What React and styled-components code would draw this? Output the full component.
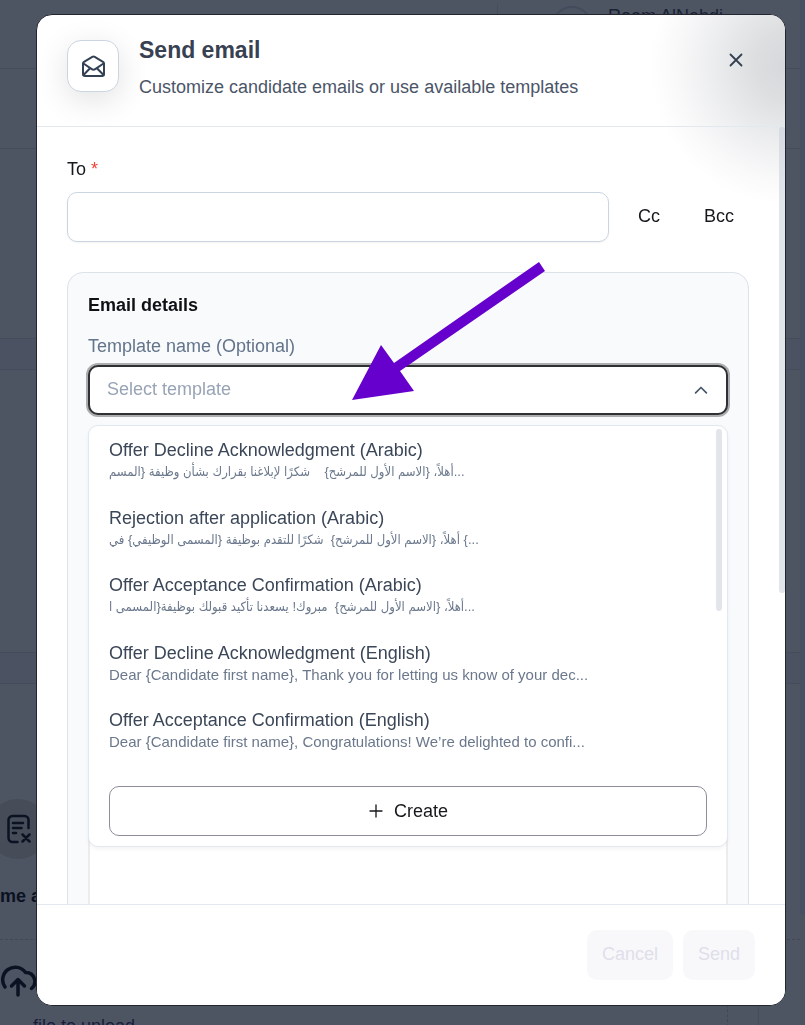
import React, { useState } from 'react'
import styled, { createGlobalStyle } from 'styled-components'

const GlobalStyle = createGlobalStyle`
  * { box-sizing: border-box; }

  body {
    margin: 0;
    overflow: hidden;
    font-family: "Liberation Sans", Arial, "DejaVu Sans Condensed", sans-serif;
    font-size: 18px;
    color: #17181c;
  }

  button, input {
    font: inherit;
    color: inherit;
  }
`

/* ---------- page behind the dialog ---------- */

const Page = styled.div`
  height: 100vh;
  display: flex;
  background: #4e5562;
  overflow: hidden;
`

const PageContent = styled.div`
  flex: 1;
  min-width: 0;
  display: flex;
  flex-direction: column;
`

const PageTrack = styled.div`
  width: 5px;
  background: #4b5260;
`

const PageThumb = styled.div`
  height: 915px;
  background: #465062;
  border-radius: 0 0 0 3px;
`

const TopBar = styled.header`
  height: 69px;
  flex: none;
  display: flex;
  justify-content: flex-end;
  align-items: flex-start;
  gap: 16px;
  padding: 4px 77px 0 0;
  border-bottom: 1px solid #454d5d;
  line-height: 24px;
  color: #1a2236;
`

const Divider = styled.span`
  width: 1px;
  height: 44px;
  margin-right: 38px;
  background: #454d5d;
`

const Avatar = styled.span`
  width: 40px;
  height: 40px;
  margin-top: 2px;
  border: 2px solid #434b5c;
  border-radius: 50%;
`

const Band = styled.div`
  flex: none;
  height: ${p => p.$height}px;
  background: ${p => (p.$tint ? '#4b5261' : 'transparent')};
  border-bottom: 1px solid #454d5d;
`

const ResumeBlock = styled.div`
  flex: none;
  height: 256px;
  padding-top: 115px;
  border-bottom: 1px dashed #3f4859;
  font-weight: bold;
  color: #0b1222;
`

const Disc = styled.div`
  width: 60px;
  height: 60px;
  margin: 0 0 27px -12px;
  display: flex;
  align-items: center;
  justify-content: center;
  border-radius: 50%;
  background: #464c58;
`

const UploadRow = styled.div`
  flex: 1;
  display: flex;
  margin-right: 41px;
  padding-right: 30px;
  border-right: 1px solid #454d5d;
`

const UploadBlock = styled.div`
  flex: 1;
  display: flex;
  flex-direction: column;
  align-items: flex-start;
  gap: 18px;
  padding-top: 20px;
  border-right: 1px dashed #3f4859;
  color: #0b1222;
  white-space: nowrap;

  span { padding-left: 33px; color: #191d3c; }
`

/* ---------- dialog ---------- */

const Overlay = styled.div`
  position: fixed;
  inset: 0;
  display: flex;
  padding: 14px 19px 19px 36px;
`

const Dialog = styled.section`
  position: relative;
  flex: 1;
  min-width: 0;
  display: flex;
  flex-direction: column;
  overflow: hidden;
  background: #fff;
  border: 1px solid #23262e;
  border-radius: 16px;
`

const Glow = styled.div`
  position: absolute;
  top: -90px;
  right: -145px;
  width: 280px;
  height: 280px;
  border-radius: 50%;
  background: radial-gradient(closest-side, #d6d7da 0%, #dddee0 25%, #ecedee 55%, #f9f9fa 82%, #fff 100%);
`

const Head = styled.header`
  position: relative;
  flex: none;
  height: 112px;
  display: flex;
  align-items: flex-start;
  gap: 20px;
  padding: 25px 35px 0 30px;
  border-bottom: 1px solid #e2e8f0;
`

const IconTile = styled.div`
  width: 52px;
  height: 52px;
  display: flex;
  align-items: center;
  justify-content: center;
  border: 1px solid #cbd5e1;
  border-radius: 14px;
  background: #fff;
  box-shadow: 0 8px 32px rgba(0, 0, 0, 0.12);
  color: #334155;
`

const Heading = styled.div`
  flex: 1;

  h2 {
    margin: -4px 0 9px;
    font-size: 23px;
    line-height: 28px;
    color: #374151;
  }

  p {
    margin: 0;
    line-height: 28px;
    color: #4b5568;
  }
`

const CloseButton = styled.button`
  width: 28px;
  height: 28px;
  margin-top: 6px;
  padding: 0;
  display: flex;
  align-items: center;
  justify-content: center;
  border: 0;
  background: none;
  color: #334155;
`

const Body = styled.div`
  position: relative;
  flex: 1;
  min-height: 0;
  display: flex;
  overflow: hidden;
`

const Form = styled.form`
  flex: 1;
  min-width: 0;
  padding: 30px 30px 0;
`

const Scrollbar = styled.div`
  width: 6px;
  height: ${p => p.$height}px;
  border-radius: 3px;
  background: rgba(203, 208, 216, 0.55);
`

const Label = styled.label`
  display: block;
  line-height: 24px;
  color: ${p => (p.$muted ? '#64748b' : '#17181c')};

  span { color: #f04438; }
`

const ToRow = styled.div`
  display: flex;
  align-items: center;
  margin: 11px 0 30px;
`

const ToInput = styled.input`
  flex: 1;
  min-width: 0;
  height: 50px;
  padding: 0 20px;
  border: 1px solid #cbd5e1;
  border-radius: 10px;
  background: #fff;
  box-shadow: 0 1px 2px rgba(16, 24, 40, 0.05);
`

const CopyButton = styled.button`
  width: ${p => (p.$wide ? '60px' : '80px')};
  height: 48px;
  padding: 0 0 2px;
  border: 0;
  background: none;
`

const Card = styled.fieldset`
  min-width: 0;
  height: 700px;
  margin: 0;
  padding: 20px;
  border: 1px solid #dde2ea;
  border-radius: 16px;
  background: #f8fafc;

  h3 {
    margin: 0 0 17px;
    font-size: 18px;
    line-height: 24px;
    color: #101114;
  }
`

const SelectWrap = styled.div`
  position: relative;
  margin-top: 7px;
`

const SelectButton = styled.button`
  width: 100%;
  height: 50px;
  display: flex;
  align-items: center;
  justify-content: space-between;
  padding: 0 15px 0 17px;
  border: 2px solid #2f3033;
  border-radius: 10px;
  background: #fff;
  box-shadow: 0 0 0 2px #acadaf;
  color: #98a4b5;

  span { padding-bottom: 2px; }
  svg { color: #475569; }
`

const Menu = styled.div`
  position: absolute;
  top: 60px;
  left: 0;
  right: 0;
  padding: 3px 5px 10px 0;
  border: 1px solid #e2e8f0;
  border-radius: 10px;
  background: #fff;
  box-shadow: 0 2px 4px rgba(16, 24, 40, 0.05);
`

const MenuScroll = styled.div`
  display: flex;
  justify-content: space-between;
  height: 357px;
`

const Options = styled.ul`
  min-width: 0;
  margin: 0;
  padding: 9px 0 0 20px;
  list-style: none;
`

const Option = styled.li`
  height: 44px;
  margin-bottom: 24px;
  color: #3b4758;
  line-height: 24px;

  &:nth-child(even) { margin-bottom: 23px; }
`

const Preview = styled.div`
  font-size: ${p => (p.$arabic ? '13px' : '15px')};
  line-height: 20px;
  color: #6b788c;
  white-space: pre;
`

const CreateButton = styled.button`
  width: calc(100% - 35px);
  height: 50px;
  margin-left: 20px;
  display: flex;
  align-items: center;
  justify-content: center;
  gap: 10px;
  border: 1px solid #8d8d9b;
  border-radius: 10px;
  background: #fff;
`

const Editor = styled.div`
  height: 500px;
  margin-top: 80px;
  border: 2px solid #ececee;
  background: #fff;
`

const Footer = styled.footer`
  flex: none;
  height: 101px;
  display: flex;
  align-items: center;
  justify-content: flex-end;
  gap: 10px;
  padding: 0 30px;
  border-top: 1px solid #e2e8f0;
  background: #fff;
`

const FooterButton = styled.button`
  height: 50px;
  padding: 0 15px 2px;
  border: 0;
  border-radius: 10px;
  background: #f8f8fb;
  color: #dfdfea;
`

const Arrow = styled.svg`
  position: absolute;
  top: 135px;
  left: 315px;
  pointer-events: none;
`

const Line = ({ size = 24, box = 24, width = 2, children }) => (
  <svg width={size} height={size} viewBox={`0 0 ${box} ${box}`} fill="none" stroke="currentColor"
    strokeWidth={width} strokeLinecap="round" strokeLinejoin="round" aria-hidden="true">
    {children}
  </svg>
)

const templates = [
  {
    name: 'Offer Decline Acknowledgment (Arabic)',
    arabic: true,
    preview: 'أهلاً، {الاسم الأول للمرشح}    شكرًا لإبلاغنا بقرارك بشأن وظيفة {المسم...',
  },
  {
    name: 'Rejection after application (Arabic)',
    arabic: true,
    preview: 'أهلاً، {الاسم الأول للمرشح}  شكرًا للتقدم بوظيفة {المسمى الوظيفي} في {...',
  },
  {
    name: 'Offer Acceptance Confirmation (Arabic)',
    arabic: true,
    preview: 'أهلاً، {الاسم الأول للمرشح}  مبروك! يسعدنا تأكيد قبولك بوظيفة{المسمى ا...',
  },
  {
    name: 'Offer Decline Acknowledgment (English)',
    preview: 'Dear {Candidate first name}, Thank you for letting us know of your dec...',
  },
  {
    name: 'Offer Acceptance Confirmation (English)',
    preview: 'Dear {Candidate first name}, Congratulations! We’re delighted to confi...',
  },
]

const Background = () => (
  <Page>
    <PageContent>
      <TopBar>
        <Divider />
        <Avatar />
        <span>Reem AlNahdi</span>
      </TopBar>
      <Band $height={80} />
      <Band $height={190} />
      <Band $height={31} $tint />
      <Band $height={283} />
      <Band $height={31} $tint />
      <ResumeBlock>
        <Disc>
          <Line size={32} box={32} width={2.5}>
            <path d="M26.500 15V7a4 4 0 0 0-4-4h-12a4 4 0 0 0-4 4v18a4 4 0 0 0 4 4h5" />
            <path d="M11 10h10M11 15h8.500M11 20h3M20.500 21.500l7 7M27.500 21.500l-7 7" />
          </Line>
        </Disc>
        me a
      </ResumeBlock>
      <UploadRow>
        <UploadBlock>
          <Line size={38} box={38} width={3.5}>
            <path d="M5 27A12 12 0 1 1 25.500 12.500A9 9 0 0 1 31.500 28.500" />
            <path d="M18 35V20M11.500 26l6.500-6.500 6.500 6.500" />
          </Line>
          <span>file to upload</span>
        </UploadBlock>
      </UploadRow>
    </PageContent>
    <PageTrack><PageThumb /></PageTrack>
  </Page>
)

const TemplateSelect = () => {
  const [open, setOpen] = useState(true)

  return (
    <SelectWrap>
      <SelectButton id="template" type="button" aria-expanded={open} onClick={() => setOpen(!open)}>
        <span>Select template</span>
        <Line size={20}><path d="m5.500 15.500 6.500-6.500 6.500 6.500" /></Line>
      </SelectButton>
      {open && (
        <Menu>
          <MenuScroll>
            <Options>
              {templates.map(t => (
                <Option key={t.name}>
                  {t.name}
                  <Preview $arabic={t.arabic}>{t.preview}</Preview>
                </Option>
              ))}
            </Options>
            <Scrollbar $height={182} />
          </MenuScroll>
          <CreateButton type="button">
            <Line size={16}><path d="M12 3v18M3 12h18" /></Line>
            Create
          </CreateButton>
        </Menu>
      )}
    </SelectWrap>
  )
}

const App = () => (
  <>
    <GlobalStyle />
    <Background />
    <Overlay>
      <Dialog role="dialog" aria-labelledby="dialog-title">
        <Glow />
        <Head>
          <IconTile>
            <Line size={26} box={26}>
              <path d="M3 10.500V21a2 2 0 0 0 2 2h17a2 2 0 0 0 2-2V10.500a2 2 0 0 0-1-1.700l-8.300-5a2.500 2.500 0 0 0-2.400 0L4 8.800a2 2 0 0 0-1 1.700Z" />
              <path d="m3.500 10.500 8.300 5.600a3 3 0 0 0 3.400 0l8.300-5.600M3.500 22l6.500-6.800M23.500 22l-6.500-6.800" />
            </Line>
          </IconTile>
          <Heading>
            <h2 id="dialog-title">Send email</h2>
            <p>Customize candidate emails or use available templates</p>
          </Heading>
          <CloseButton type="button" aria-label="Close">
            <Line size={22}><path d="M18 6 6 18M6 6l12 12" /></Line>
          </CloseButton>
        </Head>
        <Body>
          <Form>
            <Label htmlFor="to">To <span>*</span></Label>
            <ToRow>
              <ToInput id="to" type="text" />
              <CopyButton type="button">Cc</CopyButton>
              <CopyButton type="button" $wide>Bcc</CopyButton>
            </ToRow>
            <Card>
              <h3>Email details</h3>
              <Label htmlFor="template" $muted>Template name (Optional)</Label>
              <TemplateSelect />
              <Editor />
            </Card>
            <Arrow width="194" height="140" viewBox="0 0 194 140" aria-hidden="true">
              <path d="M0 138 29 83 42 101 187 0 193 9 48 109 62 129Z" fill="#6600cc" />
            </Arrow>
          </Form>
          <Scrollbar $height={466} />
        </Body>
        <Footer>
          <FooterButton type="button" disabled>Cancel</FooterButton>
          <FooterButton type="button" disabled>Send</FooterButton>
        </Footer>
      </Dialog>
    </Overlay>
  </>
)

export default App
